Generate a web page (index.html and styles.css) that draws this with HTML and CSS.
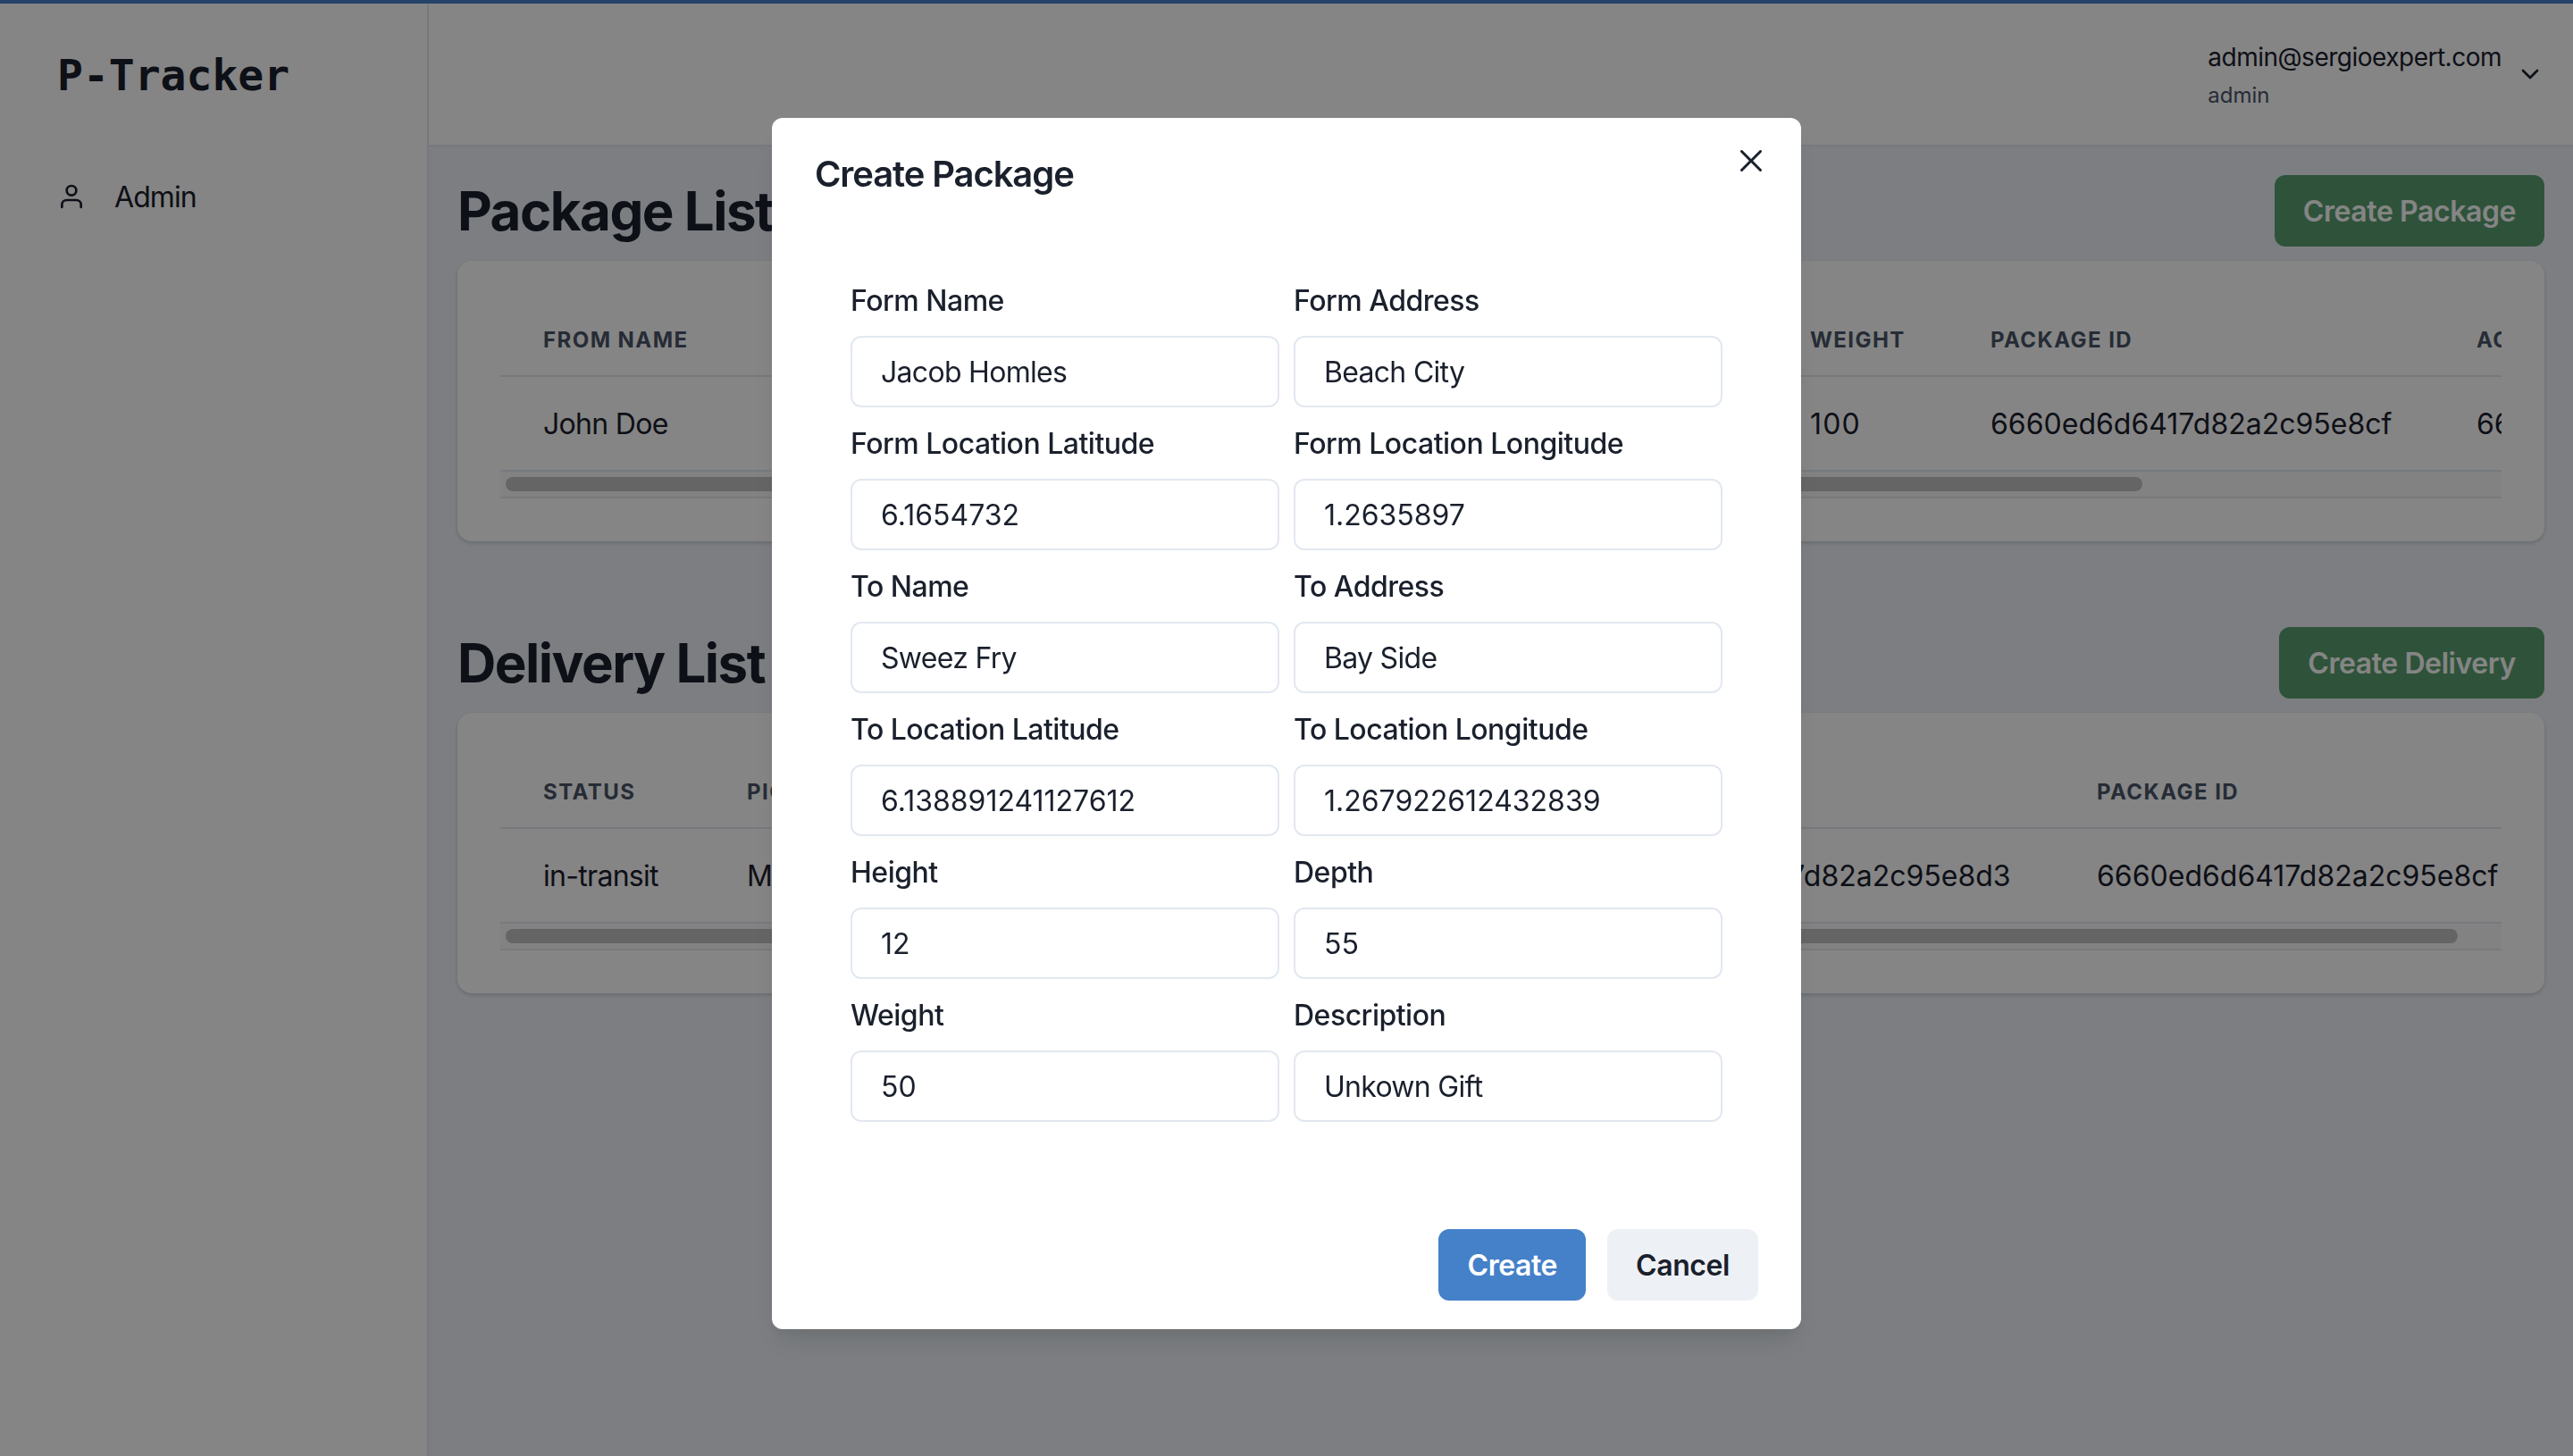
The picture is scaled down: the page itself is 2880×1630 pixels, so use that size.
FILE: index.html
```html
<!DOCTYPE html>
<html lang="en">
<head>
<meta charset="utf-8">
<title>P-Tracker</title>
<link rel="stylesheet" href="styles.css">
</head>
<body>
<div class="app">
  <aside class="sidebar">
    <div class="logo">P-Tracker</div>
    <nav class="nav">
      <a class="nav-item">
        <svg class="nav-icon" viewBox="0 0 24 24" fill="none" stroke="currentColor" stroke-width="2" stroke-linecap="round" stroke-linejoin="round"><path d="M20 21v-2a4 4 0 0 0-4-4H8a4 4 0 0 0-4 4v2"/><circle cx="12" cy="7" r="4"/></svg>
        <span>Admin</span>
      </a>
    </nav>
  </aside>
  <div class="main">
    <header class="topbar">
      <div class="user">
        <div class="user-mail">admin@sergioexpert.com</div>
        <div class="user-role">admin</div>
      </div>
      <svg class="chevron" viewBox="0 0 24 24" fill="none" stroke="currentColor" stroke-width="2" stroke-linecap="round" stroke-linejoin="round"><polyline points="6 9 12 15 18 9"/></svg>
    </header>
    <main class="content">
      <section class="section">
        <div class="section-head">
          <h2 class="section-title">Package List</h2>
          <button class="btn btn-green">Create Package</button>
        </div>
        <div class="card">
          <div class="table-wrap">
            <table class="table table-package">
              <colgroup><col class="pc1"><col class="pc2"><col class="pc3"><col class="pc4"><col class="pc5"></colgroup>
              <thead><tr><th>From Name</th><th></th><th>Weight</th><th>Package ID</th><th>Active Delivery ID</th></tr></thead>
              <tbody><tr><td class="text-cell">John Doe</td><td></td><td class="num-cell">100</td><td>6660ed6d6417d82a2c95e8cf</td><td>6660ed6d6417d82a2c95e8d3</td></tr></tbody>
            </table>
          </div>
          <div class="scrollbar"><div class="thumb thumb-package"></div></div>
        </div>
      </section>
      <section class="section">
        <div class="section-head">
          <h2 class="section-title">Delivery List</h2>
          <button class="btn btn-green">Create Delivery</button>
        </div>
        <div class="card">
          <div class="table-wrap">
            <table class="table table-delivery">
              <colgroup><col class="dc1"><col class="dc2"><col class="dc3"><col class="dc4"></colgroup>
              <thead><tr><th>Status</th><th>Pickup</th><th></th><th>Package ID</th></tr></thead>
              <tbody><tr><td class="text-cell">in-transit</td><td>Mon</td><td>6660ed6d6417d82a2c95e8d3</td><td>6660ed6d6417d82a2c95e8cf</td></tr></tbody>
            </table>
          </div>
          <div class="scrollbar"><div class="thumb thumb-delivery"></div></div>
        </div>
      </section>
    </main>
  </div>
</div>

<div class="overlay">
  <div class="modal">
    <h3 class="modal-title">Create Package</h3>
    <button class="modal-close" aria-label="Close">
      <svg viewBox="0 0 24 24"><path fill="currentColor" d="M.44 21.44a1.5 1.5 0 0 0 2.12 2.12L12 14.12l9.44 9.44a1.5 1.5 0 0 0 2.12-2.12L14.12 12l9.44-9.44A1.5 1.5 0 0 0 21.44.44L12 9.88 2.56.44A1.5 1.5 0 0 0 .44 2.56L9.88 12z"/></svg>
    </button>
    <form class="form">
      <label class="field"><span class="field-label">Form Name</span><input class="input input-text" value="Jacob Homles"></label>
      <label class="field"><span class="field-label">Form Address</span><input class="input input-text" value="Beach City"></label>
      <label class="field"><span class="field-label">Form Location Latitude</span><input class="input" value="6.1654732"></label>
      <label class="field"><span class="field-label">Form Location Longitude</span><input class="input" value="1.2635897"></label>
      <label class="field"><span class="field-label">To Name</span><input class="input input-text" value="Sweez Fry"></label>
      <label class="field"><span class="field-label">To Address</span><input class="input input-text" value="Bay Side"></label>
      <label class="field"><span class="field-label">To Location Latitude</span><input class="input" value="6.138891241127612"></label>
      <label class="field"><span class="field-label">To Location Longitude</span><input class="input" value="1.267922612432839"></label>
      <label class="field"><span class="field-label">Height</span><input class="input" value="12"></label>
      <label class="field"><span class="field-label">Depth</span><input class="input" value="55"></label>
      <label class="field"><span class="field-label">Weight</span><input class="input" value="50"></label>
      <label class="field"><span class="field-label">Description</span><input class="input input-text" value="Unkown Gift"></label>
    </form>
    <div class="modal-footer">
      <button class="btn btn-blue">Create</button>
      <button class="btn btn-gray">Cancel</button>
    </div>
  </div>
</div>
</body>
</html>
```
FILE: styles.css
```css
* { box-sizing: border-box; }
html, body { margin: 0; height: 100%; overflow: hidden; }
body { font-family: Inter, "Noto Sans", sans-serif; font-size: 32px; color: #1A202C; background: #EDF2F7; }
button, input { font-family: inherit; }

.app { display: flex; height: 1630px; border-top: 4px solid #4581C9; }

.sidebar { width: 480px; flex: none; background: #fff; border-right: 2px solid #E2E8F0; }
.logo { height: 160px; padding-left: 64px; display: flex; align-items: center; font-family: "DejaVu Sans Mono", "Liberation Mono", monospace; font-weight: 700; font-size: 48px; color: #1A202C; }
.nav { padding: 40px 64px 0; }
.nav-item { display: flex; align-items: center; gap: 32px; height: 32px; font-size: 32px; letter-spacing: -.9px; }
.nav-icon { width: 32px; height: 32px; flex: none; }

.main { flex: 1; min-width: 0; display: flex; flex-direction: column; }
.topbar { height: 160px; flex: none; background: #fff; border-bottom: 2px solid #E2E8F0; display: flex; align-items: center; justify-content: flex-end; gap: 16px; padding: 0 32px; }
.user { display: flex; flex-direction: column; gap: 4px; padding-top: 2px; }
.user-mail { font-size: 28px; line-height: 42px; letter-spacing: -.5px; }
.user-role { font-size: 24px; line-height: 36px; color: #4A5568; }
.chevron { width: 32px; height: 32px; flex: none; }

.content { padding: 32px; display: flex; flex-direction: column; gap: 96px; }
.section-head { display: flex; justify-content: space-between; align-items: center; margin-bottom: 16px; }
.section-title { margin: 0; font-size: 60px; line-height: 80px; font-weight: 700; letter-spacing: -1.5px; color: #1A202C; }

.btn { height: 80px; padding: 0 32px; border: 0; border-radius: 12px; font-size: 32px; font-weight: 600; letter-spacing: -.42px; }
.btn-green { background: #5AA06F; color: #fff; }
.btn-blue { background: #4581C9; color: #fff; }
.btn-gray { background: #EDF0F5; color: #1A202C; }

.card { background: #fff; border-radius: 16px; padding: 48px; box-shadow: 0 2px 4px rgba(0,0,0,.1), 0 2px 4px rgba(0,0,0,.06); }
.table-wrap { overflow: hidden; }
.table { border-collapse: collapse; table-layout: fixed; }
.table-package { width: 2707px; }
.table-delivery { width: 2282px; }
.pc1 { width: 255px; }
.pc2 { width: 1163px; }
.pc3 { width: 202px; }
.pc4 { width: 544px; }
.pc5 { width: 543px; }
.dc1 { width: 228px; }
.dc2 { width: 956px; }
.dc3 { width: 555px; }
.dc4 { width: 543px; }
.table th { padding: 25px 48px 23px; font-size: 24px; line-height: 32px; font-weight: 700; letter-spacing: .06em; text-transform: uppercase; text-align: left; color: #4A5568; border-bottom: 2px solid #E2E8F0; white-space: nowrap; overflow: hidden; }
.table td { padding: 33px 48px 31px; font-size: 32px; line-height: 40px; border-bottom: 2px solid #E2E8F0; white-space: nowrap; overflow: hidden; }
.table .text-cell { letter-spacing: -.7px; }
.table .num-cell { letter-spacing: 1.2px; }
.scrollbar { height: 30px; padding: 6px 6px 0; background: #FAFAFA; border-bottom: 2px solid #E8E8E8; }
.thumb { height: 16px; border-radius: 8px; background: #C2C2C2; }
.thumb-package { width: 1832px; }
.thumb-delivery { width: 2185px; }

.overlay { position: fixed; inset: 0; background: rgba(0,0,0,.48); display: flex; justify-content: center; align-items: flex-start; padding-top: 132px; }
.modal { position: relative; width: 1152px; height: 1356px; background: #fff; border-radius: 12px; box-shadow: 0 20px 30px -6px rgba(0,0,0,.1), 0 8px 12px -4px rgba(0,0,0,.05); display: flex; flex-direction: column; }
.modal-title { margin: 0; padding: 33px 48px 31px; font-size: 40px; line-height: 60px; font-weight: 600; letter-spacing: -1.1px; }
.modal-close { position: absolute; top: 16px; right: 24px; width: 64px; height: 64px; padding: 20px; border: 0; background: none; color: #1A202C; display: flex; align-items: center; justify-content: center; }
.modal-close svg { width: 24px; height: 24px; flex: none; }
.form { display: grid; grid-template-columns: 480px 480px; column-gap: 16px; row-gap: 16px; padding: 56px 88px 0; }
.field { display: flex; flex-direction: column; gap: 16px; }
.field-label { font-size: 32px; line-height: 48px; font-weight: 500; letter-spacing: -.5px; position: relative; top: 1px; }
.input { width: 100%; height: 80px; padding: 0 32px; border: 2px solid #E2E8F0; border-radius: 12px; font-size: 32px; color: #1A202C; background: #fff; outline: 0; }
.input-text { letter-spacing: -.7px; }
.modal-footer { margin-top: auto; padding: 32px 48px; display: flex; justify-content: flex-end; gap: 24px; }
```
